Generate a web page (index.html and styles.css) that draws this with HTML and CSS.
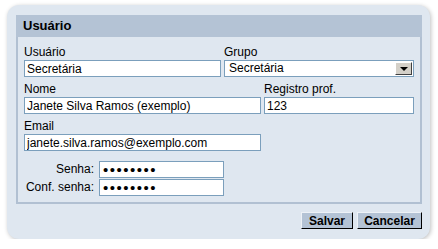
FILE: index.html
```html
<!DOCTYPE html>
<html lang="pt-BR">
<head>
    <meta charset="UTF-8">
    <meta name="viewport" content="width=device-width, initial-scale=1.0">
    <title>Usuário</title>
    <link rel="stylesheet" href="styles.css">
</head>
<body>
<div class="panel">
    <div class="box">
        <div class="box-title">Usuário</div>
        <div class="box-body">
            <div class="row">
                <div class="field w-user">
                    <label>Usuário</label>
                    <input type="text" value="Secretária">
                </div>
                <div class="field w-group">
                    <label>Grupo</label>
                    <div class="select">
                        <span class="select-text">Secretária</span>
                        <span class="select-btn"><span class="arrow"></span></span>
                    </div>
                </div>
            </div>
            <div class="row">
                <div class="field w-name">
                    <label>Nome</label>
                    <input type="text" value="Janete Silva Ramos (exemplo)">
                </div>
                <div class="field w-reg">
                    <label>Registro prof.</label>
                    <input type="text" value="123">
                </div>
            </div>
            <div class="row">
                <div class="field w-name">
                    <label>Email</label>
                    <input type="text" value="janete.silva.ramos@exemplo.com">
                </div>
            </div>
            <div class="pass-grid">
                <label>Senha:</label>
                <input type="password" value="12345678">
                <label>Conf. senha:</label>
                <input type="password" value="12345678">
            </div>
        </div>
    </div>
    <div class="actions">
        <button class="btn btn-save">Salvar</button>
        <button class="btn btn-cancel">Cancelar</button>
    </div>
</div>
</body>
</html>
```

FILE: styles.css
```css
body {
    margin: 0;
    padding: 5px 0 0 7px;
    background-color: #ffffff;
    font-family: "Liberation Sans", Arial, sans-serif;
    font-size: 12px;
    color: #000;
}
.panel {
    width: 423px;
    height: 234px;
    box-sizing: border-box;
    padding: 10px 8px 0 9px;
    background-color: #dfe7f0;
    border-radius: 12px;
    box-shadow: 1px 1px 4px rgba(0, 0, 0, 0.25);
}
.box {
    border: 2px solid #b1c0d2;
    border-top: none;
}
.box-title {
    height: 22px;
    line-height: 22px;
    margin: 0 -2px;
    padding-left: 7px;
    background-color: #b4c3d5;
    font-size: 13px;
    font-weight: bold;
}
.box-body {
    padding: 7px 0 6px 6px;
}
.row {
    display: flex;
    gap: 3px;
    margin-bottom: 4px;
}
.field label {
    display: block;
    height: 16px;
    line-height: 16px;
}
input {
    display: block;
    box-sizing: border-box;
    height: 17px;
    margin: 0;
    padding: 0 2px;
    border: 1px solid #7b9fbc;
    background-color: #fff;
    font-family: "Liberation Sans", Arial, sans-serif;
    font-size: 12px;
    color: #000;
    outline: none;
}
.field input {
    width: 100%;
}
.w-user {
    width: 197px;
}
.w-group {
    width: 190px;
}
.w-name {
    width: 237px;
}
.w-reg {
    width: 150px;
}
.select {
    display: flex;
    box-sizing: border-box;
    height: 17px;
    border: 1px solid #7b9fbc;
    background-color: #fff;
}
.select-text {
    flex: 1;
    padding-left: 4px;
    line-height: 15px;
}
.select-btn {
    width: 17px;
    height: 13px;
    margin: 1px;
    display: flex;
    align-items: center;
    justify-content: center;
    background-color: #d4d0c8;
    border: 1px solid;
    border-color: #fff #404040 #404040 #fff;
    box-sizing: border-box;
}
.arrow {
    width: 0;
    height: 0;
    border-left: 4px solid transparent;
    border-right: 4px solid transparent;
    border-top: 4px solid #000;
}
.pass-grid {
    display: grid;
    grid-template-columns: 70px 125px;
    column-gap: 5px;
    row-gap: 1px;
    margin-top: 10px;
}
.pass-grid label {
    text-align: right;
    line-height: 17px;
    white-space: nowrap;
}
input[type="password"] {
    font-size: 15px;
    letter-spacing: 1.5px;
    padding-left: 3px;
}
.actions {
    display: flex;
    justify-content: flex-end;
    gap: 4px;
    margin-top: 8px;
}
.btn {
    height: 17px;
    padding: 0;
    background-color: #b4c3d5;
    border: 1px solid;
    border-color: #eef2f7 #000 #000 #eef2f7;
    font-family: "Liberation Sans", Arial, sans-serif;
    font-size: 12px;
    font-weight: bold;
    color: #000;
    cursor: pointer;
}
.btn-save {
    width: 52px;
}
.btn-cancel {
    width: 65px;
}
```
